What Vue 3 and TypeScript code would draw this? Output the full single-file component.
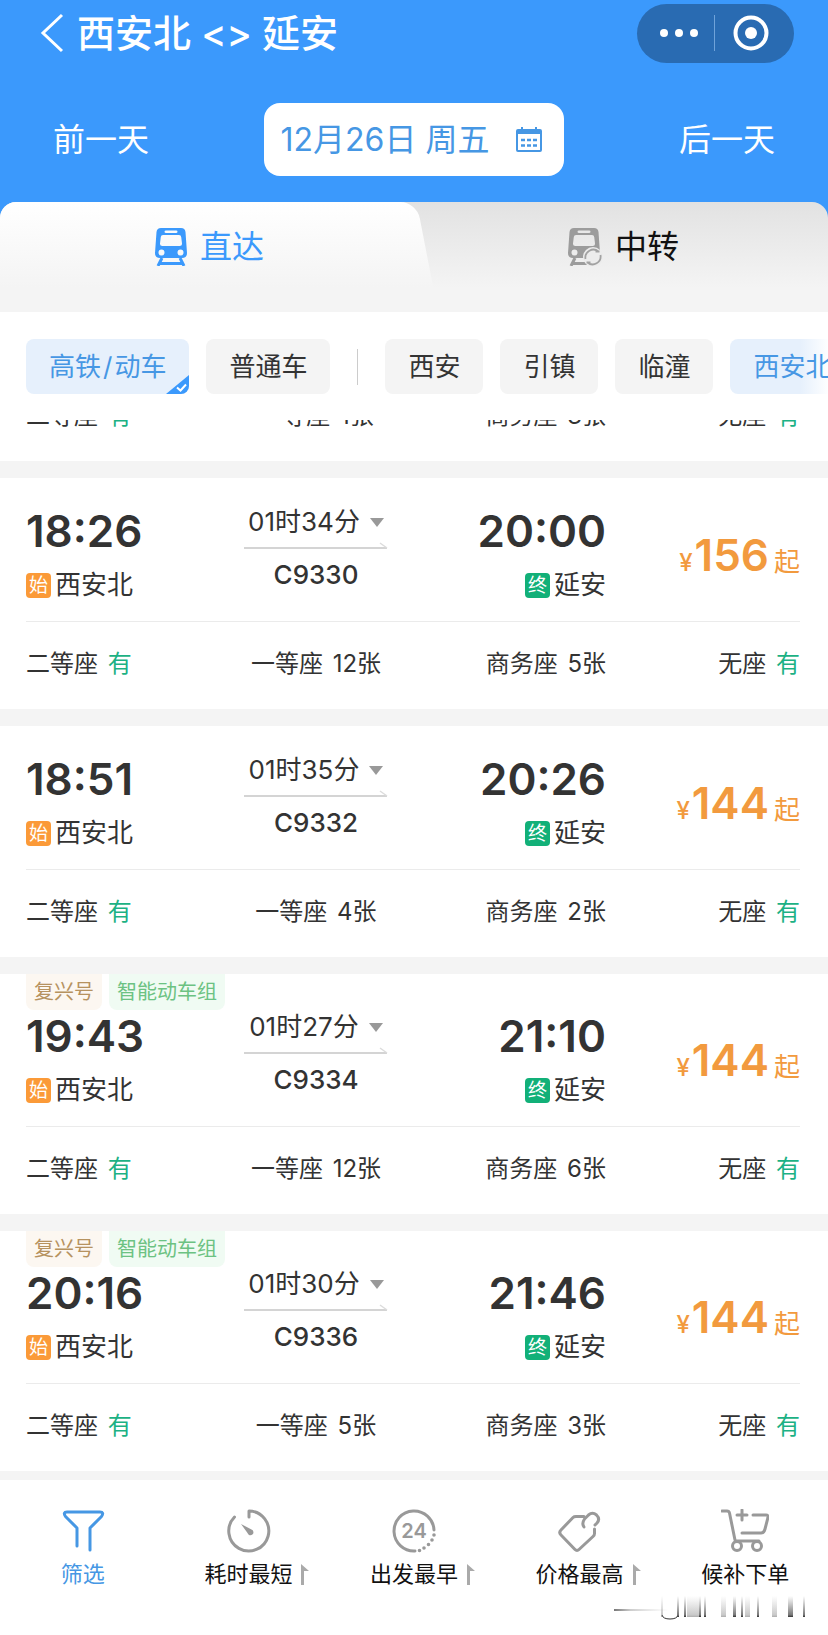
<script setup lang="ts">
import { ref } from 'vue'

interface Seat { name: string; left: string }
interface Train {
  depart: string
  arrive: string
  duration: string
  code: string
  price: number
  tags: boolean
  seats: Seat[]
}

const seatList = (first: string, business: string): Seat[] => [
  { name: '二等座', left: '有' },
  { name: '一等座', left: first },
  { name: '商务座', left: business },
  { name: '无座', left: '有' },
]

const scrolledSeats = seatList('1张', '3张')

const trains: Train[] = [
  { depart: '18:26', arrive: '20:00', duration: '01时34分', code: 'C9330', price: 156, tags: false, seats: seatList('12张', '5张') },
  { depart: '18:51', arrive: '20:26', duration: '01时35分', code: 'C9332', price: 144, tags: false, seats: seatList('4张', '2张') },
  { depart: '19:43', arrive: '21:10', duration: '01时27分', code: 'C9334', price: 144, tags: true, seats: seatList('12张', '6张') },
  { depart: '20:16', arrive: '21:46', duration: '01时30分', code: 'C9336', price: 144, tags: true, seats: seatList('5张', '3张') },
]

const stations = ['西安', '引镇', '临潼']
const tab = ref<'direct' | 'transfer'>('direct')

const sorts = [
  { id: 'filter', label: '筛选', flag: false },
  { id: 'duration', label: '耗时最短', flag: true },
  { id: 'early', label: '出发最早', flag: true },
  { id: 'price', label: '价格最高', flag: true },
  { id: 'cart', label: '候补下单', flag: false },
]
</script>

<template>
  <div class="page">
    <header class="top">
      <div class="title-row">
        <button class="back" aria-label="返回">
          <svg width="24" height="40" viewBox="0 0 24 40"><path d="M22 2 3 20 22 38" fill="none" stroke="currentColor" stroke-width="3" /></svg>
        </button>
        <h1>西安北 &lt;&gt; 延安</h1>
        <div class="capsule">
          <button class="more" aria-label="更多">
            <svg width="40" height="10" viewBox="0 0 40 10" fill="currentColor"><circle cx="5" cy="5" r="4" /><circle cx="20" cy="5" r="4" /><circle cx="35" cy="5" r="4" /></svg>
          </button>
          <span class="capsule-line"></span>
          <button class="close" aria-label="关闭">
            <svg width="36" height="36" viewBox="0 0 36 36"><circle cx="18" cy="18" r="15.5" fill="none" stroke="currentColor" stroke-width="4" /><circle cx="18" cy="18" r="6" fill="currentColor" /></svg>
          </button>
        </div>
      </div>
      <div class="date-row">
        <button class="day">前一天</button>
        <button class="date">
          <span>12月26日 周五</span>
          <svg width="28" height="26" viewBox="0 0 28 26">
            <path d="M3 2h22a2 2 0 0 1 2 2v19a2 2 0 0 1-2 2H3a2 2 0 0 1-2-2V4a2 2 0 0 1 2-2zM3 7v16h22V7z" fill="currentColor" fill-rule="evenodd" />
            <path d="M7 0v4M21 0v4" stroke="currentColor" stroke-width="2" />
            <path d="M6 13h4M12 13h4M18 13h4M6 18.500h4M12 18.500h4M18 18.500h4" stroke="currentColor" stroke-width="2.600" />
          </svg>
        </button>
        <button class="day">后一天</button>
      </div>
    </header>

    <div class="tabs-back">
      <div class="tabs" role="tablist">
        <button class="tab direct" role="tab" :aria-selected="tab === 'direct'" @click="tab = 'direct'">
          <svg width="34" height="38" viewBox="0 0 34 38">
            <path d="M7 0h20q4 0 4.500 4L33 25q0 5-5 5H6q-5 0-5-5L2.500 4Q3 0 7 0zM12 2.500q-1.500 0-1.500 1.200T12 5h10q1.500 0 1.500-1.300T22 2.500zM9 7Q7 7 6.800 9L6 15.500Q6 18 8.500 18h17q2.500 0 2.500-2.500L27.200 9Q27 7 25 7zM7.500 21.500a3 3 0 1 0 0 6 3 3 0 0 0 0-6zM26.500 21.500a3 3 0 1 0 0 6 3 3 0 0 0 0-6z" fill="currentColor" fill-rule="evenodd" />
            <path d="M8 30 4 38M26 30l4 8M6 35.500h22" fill="none" stroke="currentColor" stroke-width="3" />
          </svg>
          <span>直达</span>
        </button>
        <button class="tab transfer" role="tab" :aria-selected="tab === 'transfer'" @click="tab = 'transfer'">
          <svg width="36" height="38" viewBox="0 0 36 38">
            <g color="#9c9c9c">
              <path d="M7 0h20q4 0 4.500 4L33 25q0 5-5 5H6q-5 0-5-5L2.500 4Q3 0 7 0zM12 2.500q-1.500 0-1.500 1.200T12 5h10q1.500 0 1.500-1.300T22 2.500zM9 7Q7 7 6.800 9L6 15.500Q6 18 8.500 18h17q2.500 0 2.500-2.500L27.200 9Q27 7 25 7zM7.500 21.500a3 3 0 1 0 0 6 3 3 0 0 0 0-6z" fill="currentColor" fill-rule="evenodd" />
              <path d="M8 30 4 38M6 35.500h14" fill="none" stroke="currentColor" stroke-width="3" />
            </g>
            <circle cx="26" cy="29" r="10" fill="#ececec" />
            <path d="M18.500 31a8 8 0 0 1 13-7.500M33.500 27a8 8 0 0 1-13 7.500M19.500 34.500h4M32.500 23.500h-4" fill="none" stroke="#a2a2a2" stroke-width="1.800" />
          </svg>
          <span>中转</span>
        </button>
      </div>
    </div>

    <div class="filters">
      <button class="chip on">
        高铁<span class="slash">/</span>动车
        <svg class="tick" width="23" height="19" viewBox="0 0 23 19"><path d="M0 19 23 0v11a8 8 0 0 1-8 8z" fill="#3b99fc" /><path d="m11 12.500 3.500 3L20 9.500" fill="none" stroke="#fff" stroke-width="2" /></svg>
      </button>
      <button class="chip">普通车</button>
      <span class="chip-line"></span>
      <button v-for="s in stations" :key="s" class="chip">{{ s }}</button>
      <button class="chip on fade">西安北</button>
    </div>

    <main class="list">
      <section class="peek">
        <div class="seats">
          <span v-for="s in scrolledSeats" :key="s.name">{{ s.name }} <em :class="{ ok: s.left === '有' }">{{ s.left }}</em></span>
        </div>
      </section>
      <section v-for="t in trains" :key="t.code" class="card">
        <div v-if="t.tags" class="tags"><span class="tag gold">复兴号</span><span class="tag green">智能动车组</span></div>
        <div class="info" :class="{ tagged: t.tags }">
          <div class="stop">
            <strong>{{ t.depart }}</strong>
            <span class="station"><i class="mark start">始</i>西安北</span>
          </div>
          <div class="middle">
            <button class="duration">{{ t.duration }}<svg width="14" height="9" viewBox="0 0 14 9"><path d="M0 0h14L7 9z" fill="#999" /></svg></button>
            <svg class="arrow" width="144" height="8" viewBox="0 0 144 8"><path d="M0 7h143" stroke="#d4d4d4" stroke-width="2" /><path d="m136 2 7 5" stroke="#dcdcdc" stroke-width="1.500" /></svg>
            <b>{{ t.code }}</b>
          </div>
          <div class="stop end">
            <strong>{{ t.arrive }}</strong>
            <span class="station"><i class="mark finish">终</i>延安</span>
          </div>
          <div class="price"><small>¥</small><strong>{{ t.price }}</strong><span>起</span></div>
        </div>
        <div class="seats ruled">
          <span v-for="s in t.seats" :key="s.name">{{ s.name }} <em :class="{ ok: s.left === '有' }">{{ s.left }}</em></span>
        </div>
      </section>
    </main>

    <nav class="bottom">
      <button v-for="s in sorts" :key="s.id" :class="{ active: s.id === 'filter' }">
        <svg class="icon" width="48" height="44" viewBox="0 0 48 44" fill="none" stroke="currentColor" stroke-width="3" stroke-linecap="round" stroke-linejoin="round">
          <path v-if="s.id === 'filter'" d="M18 37V19L6.500 7.500Q3.500 3 8 3h33q4.500 0 1.500 4.500L31 19v22" />
          <template v-else-if="s.id === 'duration'">
            <path d="M25 8V2a20 20 0 1 1-14.500 6" />
            <path d="m17 15 10.500 5.500a3 3 0 1 1-4 3.500z" fill="currentColor" stroke="none" />
          </template>
          <template v-else-if="s.id === 'early'">
            <path d="M25 42A20 20 0 1 1 44 21" />
            <path d="M44 26v.01M42 31v.01M38.500 35.500v.01M34 39v.01M29.500 41.500v.01" stroke-width="3.600" />
            <text x="24" y="29" text-anchor="middle" class="hours">24</text>
          </template>
          <template v-else-if="s.id === 'price'">
            <path d="M28 7.500H20q-2 0-3 1L5 21q-2.500 2.500 0 5l14 14.500q2 2 4 0L37 27.500q1.500-1 1.500-3V20" />
            <path d="M28 18q-2.500-3.500.5-8l4-4q4-3.500 8 0 4 4 .5 8l-2 2" />
          </template>
          <template v-else>
            <path d="M1 2h5q2 0 2.500 2L14 31M32 6h13q2.500 0 2 2.500L44 20q-1 4-4 4H21M21 1v10M16 6h10M14 32h24" />
            <circle cx="16" cy="37" r="4.500" /><circle cx="36" cy="37" r="4.500" />
          </template>
        </svg>
        <span class="label">{{ s.label }}<svg v-if="s.flag" class="flag" width="9" height="21" viewBox="0 0 9 21"><path d="M0 0l8 7H3v14H0z" fill="#aaa" /></svg></span>
      </button>
      <svg class="trace" width="200" height="26" viewBox="0 0 200 26" aria-hidden="true">
        <defs>
          <linearGradient id="rise" x1="0" y1="0" x2="0" y2="1"><stop offset="0" stop-color="#888" stop-opacity="0" /><stop offset=".9" stop-color="#777" /><stop offset="1" stop-color="#333" /></linearGradient>
          <linearGradient id="run" x1="0" y1="0" x2="1" y2="0"><stop offset="0" stop-color="#777" /><stop offset=".3" stop-color="#ccc" /><stop offset="1" stop-color="#ddd" stop-opacity="0" /></linearGradient>
        </defs>
        <path d="M1 15h55v2H1z" fill="url(#run)" />
        <path d="M49 21q1 4 8 4t8-4" fill="none" stroke="#333" />
        <path d="M64 2h2v21h-2zM71 2h2v21h-2zM86 2h2v21h-2zM91 2h2v21h-2zM120 2h3v21h-3zM128 2h2v21h-2zM144 2h2v21h-2zM175 2h5v21h-5zM190 2h2v21h-2z" fill="url(#rise)" />
        <path d="M74 2h12v21H74zM108 2h5v21h-5zM132 2h5v21h-5zM48 2h2v21h-2zM159 2h5v21h-5z" fill="url(#rise)" opacity=".4" />
      </svg>
    </nav>
  </div>
</template>

<style>
body { background: #fff; }
</style>

<style scoped>
.page { min-height: 100vh; display: flex; flex-direction: column; overflow: hidden; font-family: Inter, "Noto Sans CJK SC", sans-serif; color: #333; background: #fff; }
button { border: 0; padding: 0; margin: 0; background: none; font: inherit; color: inherit; cursor: pointer; }
svg { display: block; flex: none; }
strong { font-weight: 600; }
b { font-weight: 500; }
em, i { font-style: normal; }

.top { background: #3b99fc; color: #fff; padding-bottom: 26px; }
.title-row { display: flex; align-items: center; height: 66px; padding: 0 34px 0 40px; }
.back { margin-right: 13px; }
h1 { flex: 1; margin: 0; font-size: 38px; line-height: 46px; font-weight: 500; white-space: nowrap; }
.capsule { display: flex; align-items: center; width: 157px; height: 59px; border-radius: 30px; background: #296bb2; }
.capsule button { flex: 1; display: flex; justify-content: center; }
.capsule .more { padding-left: 6px; }
.capsule .close { padding-right: 8px; }
.capsule-line { width: 1px; height: 36px; background: #6fa3da; }
.date-row { display: flex; align-items: center; justify-content: space-between; padding: 37px 53px 0; font-size: 32px; line-height: 40px; }
.date { display: flex; align-items: center; justify-content: center; gap: 26px; width: 300px; height: 73px; padding-right: 4px; border-radius: 16px; background: #fff; color: #4697e4; white-space: nowrap; }

.tabs-back { background: #3b99fc; }
.tabs { display: flex; height: 110px; border-radius: 16px 16px 0 0; overflow: hidden; background: linear-gradient(#e2e2e2, #f4f4f4 78%); }
.tab { flex: 1; display: flex; align-items: center; justify-content: center; gap: 12px; padding: 0 0 20px 4px; font-size: 32px; line-height: 40px; position: relative; }
.direct { color: #3b99fc; }
.direct::before, .direct::after { content: ""; position: absolute; top: 0; bottom: 0; background: linear-gradient(#fff, #f4f4f4 78%); }
.direct::before { left: 50%; right: -24px; border-top-right-radius: 16px; transform: skewX(11deg); transform-origin: bottom; }
.direct::after { left: 0; right: 50%; }
.direct > * { position: relative; z-index: 1; }
.transfer { color: #111; }

.filters { display: flex; align-items: center; gap: 17px; padding: 27px 0 26px 26px; overflow: hidden; }
.chip { flex: none; position: relative; height: 55px; padding: 0 23px; border-radius: 8px; background: #f4f4f4; font-size: 26px; line-height: 32px; white-space: nowrap; }
.chip.on { color: #4697e4; background: #e6f0fc; }
.chip.fade { background: linear-gradient(90deg, #e6f0fc 70px, #fff 100px); }
.slash { margin: 0 2px; }
.tick { position: absolute; right: 0; bottom: 0; }
.chip-line { flex: none; width: 1px; height: 36px; margin: 0 10px; background: #ccc; }

.list { display: flex; flex-direction: column; gap: 17px; background: #f4f4f4; padding-bottom: 9px; }
.peek { height: 41px; display: flex; flex-direction: column; justify-content: flex-end; overflow: hidden; background: #fff; padding: 0 28px 0 26px; }
.card { background: #fff; padding: 0 28px 0 26px; }
.tags { display: flex; gap: 7px; }
.tag { padding: 0 8px; font-size: 20px; line-height: 36px; border-radius: 0 0 8px 8px; }
.gold { color: #b6925f; background: #fcf7f1; }
.green { color: #6cc282; background: #f0fbf3; }
.info, .seats { display: grid; grid-template-columns: 201fr 178fr 201fr 194fr; }
.info { padding: 30px 0 21px; }
.info.tagged { padding-top: 3px; }
.stop { display: flex; flex-direction: column; gap: 16px; }
.end { align-items: flex-end; }
.stop strong { font-size: 44px; line-height: 46px; }
.station { display: flex; align-items: center; gap: 4px; font-size: 26px; line-height: 30px; }
.mark { width: 25px; height: 25px; border-radius: 4px; color: #fff; font-size: 19px; line-height: 25px; text-align: center; }
.start { background: #fb9a38; }
.finish { background: #12b078; }
.middle { display: flex; flex-direction: column; align-items: center; white-space: nowrap; }
.duration { display: flex; align-items: center; gap: 10px; font-size: 26px; line-height: 28px; }
.arrow { margin: 5px 0 11px; }
.middle b { font-size: 26px; line-height: 30px; }
.price { display: flex; align-items: baseline; justify-content: flex-end; margin-top: 24px; height: 46px; line-height: 46px; color: #f29a3e; font-size: 26px; white-space: nowrap; }
.price small { font-size: 24px; font-weight: 500; margin-right: 2px; }
.price strong { font-size: 44px; }
.price span { margin-left: 5px; }
.seats { font-size: 24px; line-height: 84px; padding-bottom: 3px; white-space: nowrap; }
.seats em { margin-left: 3px; }
.ruled { border-top: 1px solid #ebebeb; }
.seats span:nth-child(2) { text-align: center; }
.seats span:nth-child(n + 3) { text-align: right; }
.ok { color: #1cb184; }

.bottom { position: relative; flex: 1; display: flex; align-items: flex-start; padding: 29px 0 48px; background: #fff; color: #111; }
.bottom button { flex: 1; display: flex; flex-direction: column; align-items: center; gap: 7px; }
.icon { color: #999; }
.active, .active .icon { color: #4697e4; }
.hours { font-size: 20px; font-weight: 600; fill: currentColor; stroke: none; }
.label { display: flex; align-items: center; font-size: 22px; line-height: 28px; }
.flag { margin: 0 -18px 0 9px; }
.trace { position: absolute; right: 15px; bottom: 16px; }
</style>
